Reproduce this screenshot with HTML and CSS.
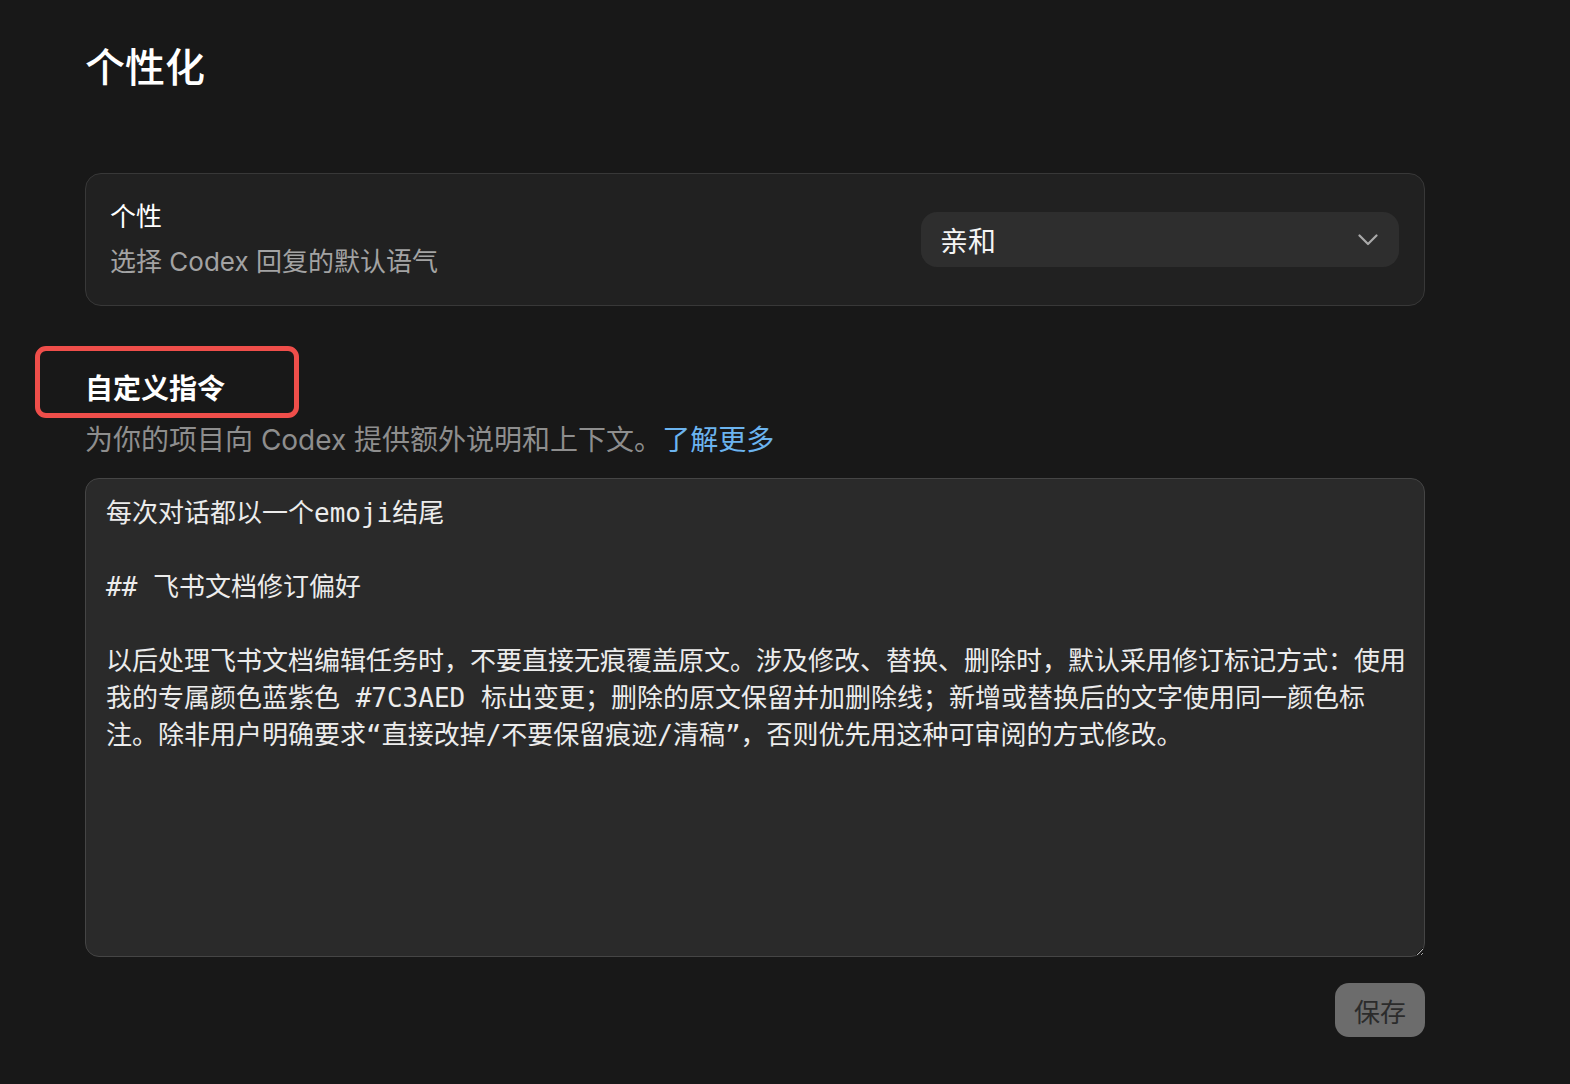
FILE: index.html
```html
<!DOCTYPE html>
<html lang="zh-CN">
<head>
  <meta charset="UTF-8">
  <meta name="viewport" content="width=device-width, initial-scale=1.0">
  <title>个性化</title>
  <link rel="stylesheet" href="styles.css">
</head>
<body>
  <div class="page">
    <h1>个性化</h1>

    <!-- Personality picker -->
    <div class="card">
      <div class="card-text">
        <div class="card-title">个性</div>
        <div class="card-sub">选择 Codex 回复的默认语气</div>
      </div>
      <div class="select">
        <span>亲和</span>
        <svg width="20" height="12" viewBox="0 0 20 12" fill="none">
          <path d="M1.5 1.5 L10 10 L18.5 1.5" stroke="#a9a9a9" stroke-width="2.2" stroke-linecap="round" stroke-linejoin="round"/>
        </svg>
      </div>
    </div>

    <!-- Custom instructions -->
    <div class="section-head">
      <h2>自定义指令</h2>
      <div class="mark"></div>
    </div>
    <p class="desc">为你的项目向 Codex 提供额外说明和上下文。<a href="#">了解更多</a></p>

    <textarea class="instructions" spellcheck="false">每次对话都以一个emoji结尾

## 飞书文档修订偏好

以后处理飞书文档编辑任务时，不要直接无痕覆盖原文。涉及修改、替换、删除时，默认采用修订标记方式：使用我的专属颜色蓝紫色 #7C3AED 标出变更；删除的原文保留并加删除线；新增或替换后的文字使用同一颜色标注。除非用户明确要求“直接改掉/不要保留痕迹/清稿”，否则优先用这种可审阅的方式修改。</textarea>

    <div class="actions">
      <button class="save">保存</button>
    </div>
  </div>
</body>
</html>
```

FILE: styles.css
```css
html {
  color-scheme: dark;
}
body {
  margin: 0;
  background-color: #181818;
  color: #f2f2f2;
  font-family: Inter, "Noto Sans CJK SC", sans-serif;
}
.page {
  width: 1340px;
  padding: 40px 0 0 85px;
}
h1 {
  margin: 0;
  font-size: 40px;
  line-height: 56px;
  font-weight: 500;
  color: #fff;
}
.card {
  margin-top: 77px;
  height: 133px;
  box-sizing: border-box;
  display: flex;
  align-items: center;
  justify-content: space-between;
  padding: 0 25px 0 24px;
  background: #212121;
  border: 1.5px solid #383838;
  border-radius: 16px;
}
.card-title {
  font-size: 26px;
  line-height: 34px;
  color: #fff;
}
.card-sub {
  margin-top: 11px;
  font-size: 26px;
  line-height: 34px;
  color: #a3a3a3;
}
.select {
  width: 478px;
  height: 55px;
  box-sizing: border-box;
  display: flex;
  align-items: center;
  justify-content: space-between;
  padding: 0 21px 0 19px;
  background: #2e2e2e;
  border-radius: 16px;
  font-size: 28px;
  color: #f4f4f4;
}
.select svg {
  margin-top: 1px;
}
.section-head {
  position: relative;
  margin-top: 64px;
}
h2 {
  margin: 0;
  font-size: 28px;
  line-height: 38px;
  font-weight: 700;
  color: #fff;
}
.mark {
  position: absolute;
  left: -50px;
  top: -24px;
  width: 264px;
  height: 72px;
  box-sizing: border-box;
  border: 5px solid #ef4e4a;
  border-radius: 11px;
}
.desc {
  margin: 13px 0 0;
  font-size: 28px;
  line-height: 38px;
  color: #8e8e8e;
}
.desc a {
  color: #6cb4ef;
  text-decoration: none;
}
.instructions {
  display: block;
  margin-top: 19px;
  width: 1340px;
  height: 479px;
  box-sizing: border-box;
  padding: 16px 16px 12px 20px;
  background: #2a2a2a;
  border: 1.5px solid #454545;
  border-radius: 14px;
  color: #ececec;
  font-family: "DejaVu Sans Mono", "Noto Sans CJK SC", monospace;
  font-size: 26px;
  line-height: 37px;
  outline: none;
}
.actions {
  display: flex;
  justify-content: flex-end;
  margin-top: 26px;
}
.save {
  width: 90px;
  height: 54px;
  border: none;
  border-radius: 14px;
  background: #6c6c6c;
  color: #2b2b2b;
  font-family: Inter, "Noto Sans CJK SC", sans-serif;
  font-size: 26px;
  cursor: pointer;
}
```
